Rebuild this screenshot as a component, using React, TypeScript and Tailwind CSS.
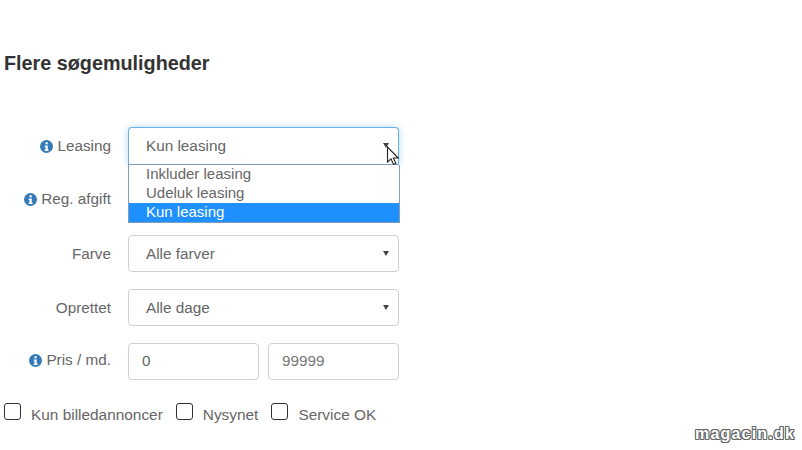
const font = 'font-["Liberation_Sans",Arial,sans-serif]';

function InfoIcon() {
  return (
    <svg viewBox="0 0 24 24" className="h-[13px] w-[13px] shrink-0">
      <circle cx="12" cy="12" r="12" fill="#337ab7" />
      <rect x="10" y="4" width="4.4" height="4" rx="1" fill="#fff" />
      <path d="M8.5 10h5.8v8h1.6v2.4H8.5V18h1.6v-5.6H8.5z" fill="#fff" />
    </svg>
  );
}

function Caret() {
  return <span className="h-0 w-0 border-x-[3.5px] border-t-[5px] border-x-transparent border-t-[#444]" />;
}

function Row({
  label,
  info,
  nudge,
  children,
}: {
  label: string;
  info?: boolean;
  nudge?: string;
  children: React.ReactNode;
}) {
  return (
    <div className="flex h-[37px] items-center">
      <div className={`flex w-[111px] items-center justify-end gap-[4px] text-[15.3px] text-[#666] ${nudge ?? ''}`}>
        {info && <InfoIcon />}
        <span>{label}</span>
      </div>
      <div className="ml-[17px] flex w-[271px] gap-[9px]">{children}</div>
    </div>
  );
}

function Select({ value, focused }: { value: string; focused?: boolean }) {
  return (
    <div
      className={
        focused
          ? 'flex h-[38px] w-full items-center justify-between rounded-t-[4px] border border-[#66afe9] border-b-[#7f9db9] pl-[17px] pr-[9px] text-[15.3px] text-[#666] shadow-[0_0_6px_rgba(102,175,233,0.5)]'
          : 'flex h-[37px] w-full items-center justify-between rounded-[4px] border border-[#d0d0d0] pl-[17px] pr-[9px] text-[15.3px] text-[#666]'
      }
    >
      <span className="pt-[2px]">{value}</span>
      <Caret />
    </div>
  );
}

function Field({ value, muted }: { value: string; muted?: boolean }) {
  return (
    <div
      className={
        muted
          ? 'flex h-[37px] w-[131px] items-center rounded-[4px] border border-[#d0d0d0] pl-[13px] text-[15.3px] text-[#777]'
          : 'flex h-[37px] w-[131px] items-center rounded-[4px] border border-[#d0d0d0] pl-[13px] text-[15.3px] text-[#666]'
      }
    >
      {value}
    </div>
  );
}

function Check({ label }: { label: string }) {
  return (
    <div className="flex items-center gap-[10px]">
      <span className="mb-[5px] h-[17px] w-[17px] rounded-[3px] border-[1.5px] border-[#333] bg-white" />
      <span className="pt-[2px] text-[15.4px] text-[#666]">{label}</span>
    </div>
  );
}

export default function App() {
  return (
    <div className={`${font} relative h-[450px] w-[802px] overflow-hidden bg-white`}>
      <h2 className="pl-[4px] pt-[52px] text-[19.8px] font-bold leading-[22px] text-[#333]">Flere søgemuligheder</h2>

      <div className="mt-[53px] flex flex-col gap-[17px]">
        <div className="relative">
          <Row label="Leasing" info nudge="pt-[2px]">
            <Select value="Kun leasing" focused />
          </Row>
          <div className="absolute left-[128px] top-[38px] z-10 w-[272px] border border-t-0 border-[#7f9db9] bg-white text-[15px] leading-[17px] text-[#666]">
            <div className="h-[19px] pl-[17px]">Inkluder leasing</div>
            <div className="h-[19px] pl-[17px]">Udeluk leasing</div>
            <div className="h-[19px] bg-[#1e90ff] pl-[17px] text-white">Kun leasing</div>
          </div>
          <svg viewBox="0 0 14 20" className="absolute left-[386px] top-[19px] z-20 h-[20px] w-[14px]">
            <path d="M1.5 1v15l3.5-3.2 2.5 5.6 2.4-1-2.5-5.4h4.8z" fill="#fff" stroke="#222" strokeWidth="1.1" />
          </svg>
        </div>
        <Row label="Reg. afgift" info>
          <Select value="" />
        </Row>
        <Row label="Farve" nudge="pt-[2px]">
          <Select value="Alle farver" />
        </Row>
        <Row label="Oprettet" nudge="pt-[2px]">
          <Select value="Alle dage" />
        </Row>
        <Row label="Pris / md." info nudge="pb-[2px]">
          <Field value="0" />
          <Field value="99999" muted />
        </Row>
      </div>

      <div className="mt-[21px] flex gap-[13px] pl-[4px]">
        <Check label="Kun billedannoncer" />
        <Check label="Nysynet" />
        <Check label="Service OK" />
      </div>

      <div className="absolute bottom-[7px] right-[7px] text-[16px] font-bold leading-[18px] tracking-[1.2px] text-white [text-shadow:-1px_0_0_#666,1px_0_0_#666,0_-1px_0_#666,0_1px_0_#666,1px_1px_0_#666,-1px_-1px_0_#666,1px_-1px_0_#666,-1px_1px_0_#666]">
        magacin.dk
      </div>
    </div>
  );
}
